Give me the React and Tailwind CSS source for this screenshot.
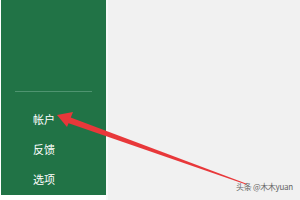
const MENU = ['帐户', '反馈', '选项'];

export default function App() {
  return (
    <div className="relative flex w-[300px] h-[200px] overflow-hidden bg-white font-['Noto_Sans_CJK_SC',sans-serif]">
      {/* Backstage sidebar */}
      <aside className="ml-px w-[105px] h-[195px] bg-[#217346] flex flex-col pt-[91px] shrink-0">
        <div className="mx-[14px] h-px bg-[#4f9470]" />
        <nav className="flex flex-col pt-[12px]">
          {MENU.map(label => (
            <div key={label} className="h-[30px] pl-[32px] flex items-center text-[11px] text-white leading-none">
              {label}
            </div>
          ))}
        </nav>
      </aside>

      {/* Main area */}
      <main className="flex-1 h-full bg-[#f1f1f1] border-l-2 border-[#f8f8f8]" />

      {/* Annotation arrow */}
      <svg className="absolute left-0 top-0" width="300" height="200" viewBox="0 0 300 200">
        <polygon points="57,115 73,112 67,127" fill="#e8383a" />
        <polygon points="68,116.5 66.5,122.5 246,184.4 246,183.4" fill="#e8383a" />
      </svg>

      {/* Watermark */}
      <div className="absolute left-[236px] top-[183px] whitespace-nowrap text-[8px] tracking-[-0.3px] leading-none text-[#666] font-['Noto_Sans_CJK_SC',sans-serif]">
        头条 @木木yuan
      </div>
    </div>
  );
}
